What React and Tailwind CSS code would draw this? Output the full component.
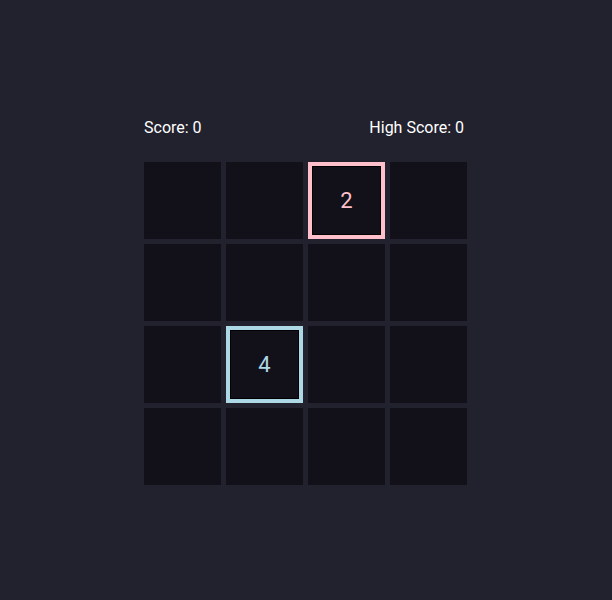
const board = [
  [0, 0, 2, 0],
  [0, 0, 0, 0],
  [0, 4, 0, 0],
  [0, 0, 0, 0],
];

const tileStyles = {
  2: 'border-4 border-[#ffc0cb] text-[#ffc0cb]',
  4: 'border-4 border-[#add8e6] text-[#add8e6]',
};

function Cell({ value }) {
  if (!value) {
    return <div className="w-[77px] h-[77px] bg-[#121119]" />;
  }
  return (
    <div
      className={`w-[77px] h-[77px] bg-[#121119] flex items-center justify-center text-[22px] shadow-[inset_0_0_0_1px_#000] ${tileStyles[value]}`}
    >
      {value}
    </div>
  );
}

export default function App() {
  return (
    <div className="h-screen w-full bg-[#22212e] flex items-center justify-center font-['Roboto',sans-serif]">
      <div className="flex flex-col pr-px">
        <div className="flex justify-between w-[320px] mt-px mb-[22px] text-base leading-6 text-white">
          <span>Score: 0</span>
          <span>High Score: 0</span>
        </div>
        <div className="grid grid-cols-4 gap-[5px]">
          {board.flat().map((v, i) => (
            <Cell key={i} value={v} />
          ))}
        </div>
      </div>
    </div>
  );
}
